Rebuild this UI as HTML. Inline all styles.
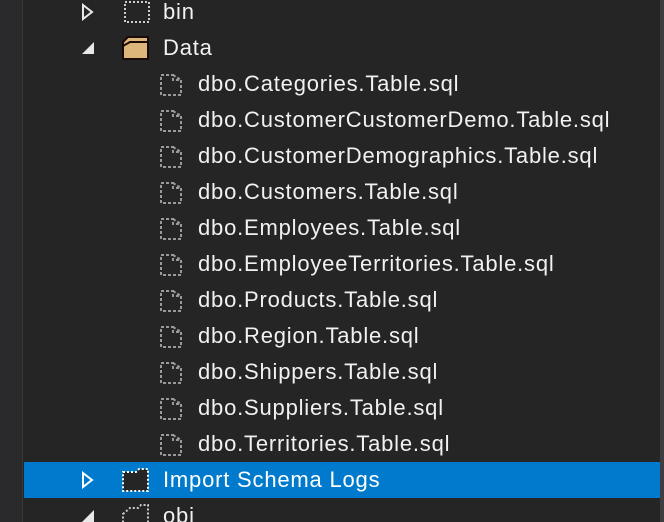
<!DOCTYPE html>
<html style="overflow:hidden"><head><style>
html,body{overflow:hidden}
body{margin:0;width:664px;height:522px;background:#252526;position:relative;font-family:"Liberation Sans",sans-serif;color:#f1f1f1;font-size:22px;letter-spacing:0.8px}
.strip{position:absolute;left:0;top:0;width:22px;height:522px;background:#2a2a2c;border-right:1px solid #3a3a3c}
.sb{position:absolute;right:0;top:0;width:4px;height:522px;background:#3e3e42}
.row{position:absolute;left:24px;width:636px;height:36px;line-height:36px}
.sel{background:#007acc}
.t{position:absolute;white-space:nowrap}
svg{position:absolute}
</style></head><body>
<div class="strip"></div><div class="sb"></div>
<div class="row" style="top:-6px">
<svg style="left:57px;top:9px" width="14" height="18"><path d="M2 2 L11 9 L2 16 Z" fill="none" stroke="#e8e8e8" stroke-width="2"/></svg>
<svg style="left:98px;top:6px" width="30" height="24"><rect x="3" y="2" width="24" height="20" fill="none" stroke="#ccc" stroke-width="2" stroke-dasharray="2 2"/></svg>
<span class="t" style="left:139px">bin</span></div>
<div class="row" style="top:30px">
<svg style="left:57px;top:9px" width="16" height="18"><path d="M13 3 L13 15 L1 15 Z" fill="#e8e8e8"/></svg>
<svg style="left:96px;top:4px" width="32" height="28"><path d="M3 8 L8 3 L28 3 L28 25 L3 25 Z" fill="#dcb67a" stroke="#1a0a0a" stroke-width="2"/><path d="M3 12 L10 8 L28 8" fill="none" stroke="#1a0a0a" stroke-width="2"/></svg>
<span class="t" style="left:139px">Data</span></div>
<div id="files"></div>
<div class="row sel" style="top:462px">
<svg style="left:57px;top:9px" width="14" height="18"><path d="M2 2 L11 9 L2 16 Z" fill="none" stroke="#fff" stroke-width="2"/></svg>
<svg style="left:96px;top:4px" width="32" height="28"><path d="M3 6 L16 6 L19 3 L28 3 L28 25 L3 25 Z" fill="#252526" stroke="#fff" stroke-width="2" stroke-dasharray="2 2"/></svg>
<span class="t" style="left:139px;color:#fff">Import Schema Logs</span></div>
<div class="row" style="top:498px;height:24px;overflow:hidden">
<svg style="left:57px;top:9px" width="16" height="18"><path d="M13 3 L13 15 L1 15 Z" fill="#e8e8e8"/></svg>
<svg style="left:96px;top:4px" width="32" height="28"><path d="M3 12 L10 6 L18 6 L21 3 L28 3 L28 25 L3 25 Z" fill="none" stroke="#ccc" stroke-width="2" stroke-dasharray="2 2"/></svg>
<span class="t" style="left:139px">obj</span></div>
<script>
var n=["Categories","CustomerCustomerDemo","CustomerDemographics","Customers","Employees","EmployeeTerritories","Products","Region","Shippers","Suppliers","Territories"],h="";
n.forEach(function(s,i){h+='<div class="row" style="top:'+(66+36*i)+'px"><svg style="left:135px;top:7px" width="26" height="24"><path d="M2 2 L14 2 L14 7 L22 7 L22 22 L2 22 Z M14 2 L22 7" fill="none" stroke="#9a9a9a" stroke-width="2" stroke-dasharray="3 2"/></svg><span class="t" style="left:174px">dbo.'+s+'.Table.sql</span></div>';});
document.getElementById("files").outerHTML=h;
</script>
</body></html>
